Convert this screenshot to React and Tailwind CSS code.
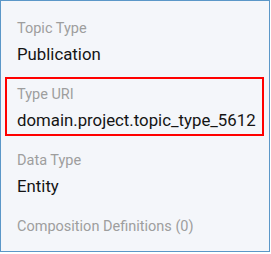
import React from 'react';

const fields = [
  { label: 'Topic Type', value: 'Publication' },
  { label: 'Type URI', value: 'domain.project.topic_type_5612' },
  { label: 'Data Type', value: 'Entity' },
];

function App() {
  return (
    <div className="w-[271px] h-[254px] bg-white" style={{ fontFamily: 'Roboto, "Noto Sans", sans-serif' }}>
      <div className="relative w-[270px] h-[252px] border border-[#5b97c8] bg-[#f4f6fa] pt-[10px]">
        {fields.map((f) => (
          <div key={f.label} className="px-4 pt-2 pb-[11px]">
            <div className="text-[14.5px] leading-5 text-[#9e9e9e]">{f.label}</div>
            <div className="mt-[3px] text-[16.8px] leading-6 text-[#141414]">{f.value}</div>
          </div>
        ))}
        <div className="px-4 pt-2">
          <div className="text-[14.5px] leading-5 text-[#9e9e9e]">Composition Definitions (0)</div>
        </div>

        {/* highlight around the URI field */}
        <div className="absolute left-[4px] top-[76px] w-[259px] h-[59px] border-2 border-[#ff0000]" />
      </div>
    </div>
  );
}

export default App;
